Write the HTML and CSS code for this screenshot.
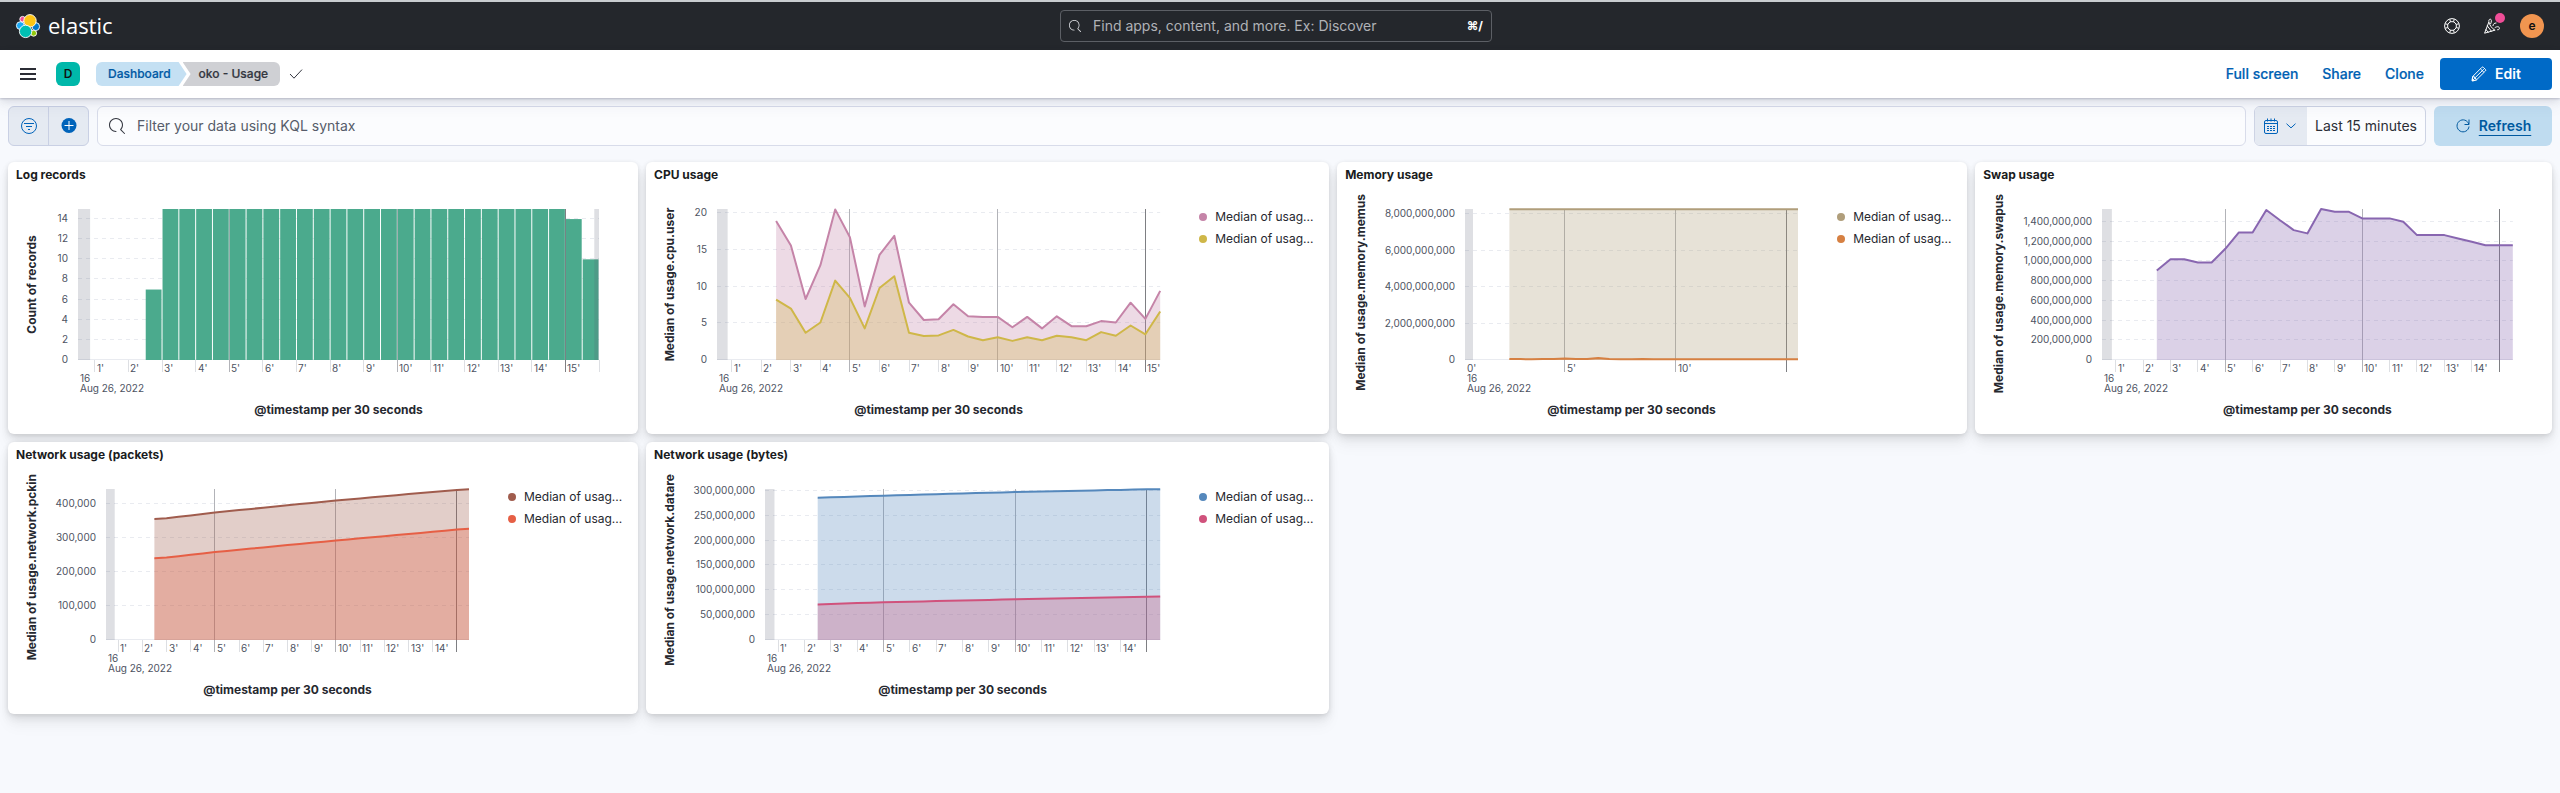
FILE: index.html
```html
<!DOCTYPE html>
<html lang="en">
<head>
<meta charset="utf-8">
<meta name="viewport" content="width=device-width, initial-scale=1">
<title>oko - Usage - Elastic</title>
<link rel="stylesheet" href="styles.css">
</head>
<body>
<header class="topbar">
  <a class="brand" href="#" aria-label="Elastic home">
    <svg class="brand-mark" viewBox="0 0 24 24" aria-hidden="true">
      <g stroke="#fff" stroke-width="0.9">
        <circle cx="6.6" cy="5.2" r="2.8" fill="#f04e98"/>
        <circle cx="17.6" cy="19.2" r="3" fill="#93c90e"/>
        <ellipse cx="4.4" cy="11.6" rx="4" ry="3.9" fill="#1ba9f5"/>
        <ellipse cx="19.8" cy="12.6" rx="3.8" ry="4" fill="#0077cc"/>
        <circle cx="14" cy="6.8" r="6.2" fill="#fec514"/>
        <circle cx="9.6" cy="17.4" r="6.2" fill="#00bfb3"/>
      </g>
    </svg>
    <span class="brand-name">elastic</span>
  </a>
  <label class="global-search">
    <svg class="icon-search-small" viewBox="0 0 16 16" aria-hidden="true"><path fill="currentColor" d="M11.271 11.978l3.872 3.873a.502.502 0 00.708 0 .502.502 0 000-.708l-3.565-3.564c2.38-2.747 2.267-6.923-.342-9.532-2.73-2.73-7.17-2.73-9.898 0-2.728 2.729-2.728 7.17 0 9.9a6.955 6.955 0 004.949 2.05.5.5 0 000-1 5.96 5.96 0 01-4.242-1.757 6.01 6.01 0 010-8.486 6.004 6.004 0 018.484 0 6.01 6.01 0 010 8.486.5.5 0 00.034.738z"/></svg>
    <input type="search" aria-label="Find apps, content, and more" placeholder="Find apps, content, and more. Ex: Discover">
    <kbd class="shortcut">⌘/</kbd>
  </label>
  <div class="topbar-actions">
    <button class="topbar-button" type="button" aria-label="Help">
      <svg class="icon" viewBox="0 0 16 16" fill="none" stroke="currentColor" aria-hidden="true">
        <circle cx="8" cy="8" r="7.4"/><circle cx="8" cy="8" r="4.4"/>
        <path d="M5.800 1.200l.6 2.700M10.200 1.200l-.6 2.700M5.800 14.800l.6-2.700M10.200 14.800l-.6-2.700M1.200 5.800l2.700.6M1.200 10.200l2.700-.6M14.800 5.800l-2.700.6M14.800 10.200l-2.700-.6"/>
      </svg>
    </button>
    <button class="topbar-button" type="button" aria-label="News feed">
      <svg class="icon" viewBox="0 0 16 16" fill="none" stroke="currentColor" stroke-linecap="round" stroke-linejoin="round" aria-hidden="true">
        <path d="M4.800 4.200L.6 15.200l10.200-3M4.800 4.200c1 3.400 3.200 6.200 6 8M3.400 8l4 5.200M2 11.600l2.200 2.600"/>
        <path d="M4.800 3.200C4.400 1 7.200.2 7.400 2.600c.1 1.400-.4 2.200-.8 3.200M9 7.600c.2-1.600 1.200-2.600 3-2.600M11 9.600c2.200-1.600 4.600-1 4.400.8-.1 1-.9 1.600-1.800 1.400"/>
      </svg>
      <span class="news-dot"></span>
    </button>
    <button class="avatar" type="button" aria-label="Account menu">e</button>
  </div>
</header>

<nav class="navbar" aria-label="Dashboard navigation">
  <button class="menu-button" type="button" aria-label="Toggle primary navigation">
    <svg class="icon" viewBox="0 0 16 16" aria-hidden="true"><path fill="currentColor" d="M0 2h16v2H0zM0 7h16v2H0zM0 12h16v2H0z"/></svg>
  </button>
  <button class="space-button" type="button" aria-label="Default space">D</button>
  <div class="breadcrumbs">
    <a class="crumb crumb-link" href="#">Dashboard</a>
    <span class="crumb crumb-current" aria-current="page">oko - Usage</span>
  </div>
  <svg class="icon-check" viewBox="0 0 14 12" fill="none" stroke="currentColor" aria-hidden="true"><path d="M1 6l4 4.200L13 1.600"/></svg>
  <div class="nav-actions">
    <a class="nav-link" href="#">Full screen</a>
    <a class="nav-link" href="#">Share</a>
    <a class="nav-link" href="#">Clone</a>
    <button class="edit-button" type="button">
      <svg class="icon" viewBox="0 0 16 16" fill="none" stroke="currentColor" stroke-linejoin="round" aria-hidden="true">
        <path d="M1.600 10.600L10.800 1.400q.8-.8 1.600 0l2 2q.8.8 0 1.600L5.200 14.200l-4 .6zM3.400 12.400l9.400-9.200M1.600 10.600l1.800.2v1.600l1.600.2.200 1.600M9.400 2.800l3.600 3.600"/>
        <path fill="currentColor" d="M1.400 12.600l2 2-2.200.300z"/>
      </svg>
      Edit
    </button>
  </div>
</nav>

<main>
  <form class="query-bar">
    <div class="filter-group">
      <button class="filter-button" type="button" aria-label="Saved query menu">
        <svg class="icon" viewBox="0 0 16 16" fill="none" stroke="currentColor" aria-hidden="true"><circle cx="8" cy="8" r="7.500"/><path d="M3 5.500h10M5 8.500h6M7 11.500h2"/></svg>
      </button>
      <button class="filter-button" type="button" aria-label="Add filter">
        <svg class="icon" viewBox="0 0 16 16" aria-hidden="true"><circle cx="8" cy="7.500" r="7.500" fill="currentColor"/><path d="M3.500 7.500h9M8 3v9" stroke="#fff"/></svg>
      </button>
    </div>
    <label class="query-input">
      <svg class="icon" viewBox="0 0 16 16" aria-hidden="true"><path fill="currentColor" d="M11.271 11.978l3.872 3.873a.502.502 0 00.708 0 .502.502 0 000-.708l-3.565-3.564c2.38-2.747 2.267-6.923-.342-9.532-2.73-2.73-7.17-2.73-9.898 0-2.728 2.729-2.728 7.17 0 9.9a6.955 6.955 0 004.949 2.05.5.5 0 000-1 5.96 5.96 0 01-4.242-1.757 6.01 6.01 0 010-8.486 6.004 6.004 0 018.484 0 6.01 6.01 0 010 8.486.5.5 0 00.034.738z"/></svg>
      <input type="text" aria-label="KQL query" placeholder="Filter your data using KQL syntax">
    </label>
    <div class="date-picker">
      <button class="date-quick" type="button" aria-label="Date quick select">
        <svg class="icon" viewBox="0 0 16 16" fill="none" stroke="currentColor" aria-hidden="true">
          <rect x="1.500" y="2.500" width="13" height="13" rx="1.500"/><path d="M1.500 5.500h13M4.500.5v3M11.500.5v3M8 .5v3"/>
          <path d="M4 8.500h2M7 8.500h2M10 8.500h2M4 10.500h2M7 10.500h2M10 10.500h2M4 12.500h2M7 12.500h2M10 12.500h2"/>
        </svg>
        <svg class="icon-chevron" viewBox="0 0 10 6" fill="none" stroke="currentColor" aria-hidden="true"><path d="M.5.7L5 4.900 9.500.7"/></svg>
      </button>
      <button class="date-range" type="button">Last 15 minutes</button>
    </div>
    <button class="refresh-button" type="button">
      <svg class="icon" viewBox="0 0 16 16" fill="none" stroke="currentColor" aria-hidden="true"><path d="M13.800 6.200A6 6 0 1 0 14 8.500M14 1.500v5H9.500"/></svg>
      <span>Refresh</span>
    </button>
  </form>

  <div class="dashboard">
    <section class="panel span-12">
      <h2 class="panel-title">Log records</h2>
      <div class="panel-body"><svg class="chart" data-chart="logs" role="img" aria-label="Log records"></svg></div>
    </section>
    <section class="panel span-13">
      <h2 class="panel-title">CPU usage</h2>
      <div class="panel-body">
        <svg class="chart" data-chart="cpu" role="img" aria-label="CPU usage"></svg>
        <ul class="legend">
          <li><span class="dot dot-pink"></span>Median of usag...</li>
          <li><span class="dot dot-yellow"></span>Median of usag...</li>
        </ul>
      </div>
    </section>
    <section class="panel span-12">
      <h2 class="panel-title">Memory usage</h2>
      <div class="panel-body">
        <svg class="chart" data-chart="memory" role="img" aria-label="Memory usage"></svg>
        <ul class="legend">
          <li><span class="dot dot-tan"></span>Median of usag...</li>
          <li><span class="dot dot-orange"></span>Median of usag...</li>
        </ul>
      </div>
    </section>
    <section class="panel span-11">
      <h2 class="panel-title">Swap usage</h2>
      <div class="panel-body"><svg class="chart" data-chart="swap" role="img" aria-label="Swap usage"></svg></div>
    </section>
    <section class="panel span-12">
      <h2 class="panel-title">Network usage (packets)</h2>
      <div class="panel-body">
        <svg class="chart" data-chart="packets" role="img" aria-label="Network usage (packets)"></svg>
        <ul class="legend">
          <li><span class="dot dot-brown"></span>Median of usag...</li>
          <li><span class="dot dot-red"></span>Median of usag...</li>
        </ul>
      </div>
    </section>
    <section class="panel span-13">
      <h2 class="panel-title">Network usage (bytes)</h2>
      <div class="panel-body">
        <svg class="chart" data-chart="bytes" role="img" aria-label="Network usage (bytes)"></svg>
        <ul class="legend">
          <li><span class="dot dot-blue"></span>Median of usag...</li>
          <li><span class="dot dot-rose"></span>Median of usag...</li>
        </ul>
      </div>
    </section>
  </div>
</main>
<script src="charts.js"></script>
</body>
</html>
```
FILE: styles.css
```css
* { box-sizing: border-box; }

body {
  margin: 0;
  min-height: 100vh;
  background: #f7f9fd;
  color: #1a1c21;
  font-family: Inter, "Liberation Sans", sans-serif;
  font-size: 14px;
  line-height: 20px;
}

button, input { font: inherit; color: inherit; }
button { border: 0; padding: 0; background: none; cursor: pointer; }
a { color: inherit; text-decoration: none; }
.icon { width: 16px; height: 16px; flex: none; display: block; }

/* Top bar */
.topbar {
  display: grid;
  grid-template-columns: 1fr minmax(200px, 432px) 1fr;
  align-items: center;
  height: 50px;
  padding: 0 16px 0 8px;
  border-top: 2px solid #c9cdd0;
  background: #24272c;
  color: #fff;
}
.brand { display: flex; align-items: center; gap: 8px; padding-left: 8px; justify-self: start; }
.brand-mark { width: 24px; height: 24px; overflow: visible; }
.brand-name { font-family: "Open Sans", "Noto Sans", sans-serif; font-size: 22px; line-height: 24px; padding-bottom: 2px; }
.global-search {
  display: flex;
  align-items: center;
  height: 32px;
  padding: 0 8px;
  border: 1px solid #5c5f65;
  border-radius: 4px;
}
.icon-search-small { width: 12px; height: 12px; flex: none; color: #dfe1e5; }
.global-search input {
  flex: 1;
  min-width: 0;
  margin-left: 12px;
  padding: 0;
  border: 0;
  outline: 0;
  background: none;
}
.global-search input::placeholder { color: #b0b2b7; opacity: 1; }
.shortcut { font-family: Inter, "DejaVu Sans", sans-serif; font-size: 12px; font-weight: 700; }
.topbar-actions { display: flex; align-items: center; justify-content: flex-end; }
.topbar-button { position: relative; display: grid; place-items: center; width: 40px; height: 40px; }
.news-dot {
  position: absolute;
  top: 7px;
  left: 23px;
  width: 10px;
  height: 10px;
  border-radius: 50%;
  background: #f04e98;
}
.avatar {
  width: 24px;
  height: 24px;
  margin-left: 8px;
  border-radius: 50%;
  background: #f19550;
  color: #111;
  font-size: 12px;
  font-weight: 600;
  line-height: 24px;
}

/* Navigation bar */
.navbar {
  position: relative;
  display: flex;
  align-items: center;
  height: 48px;
  padding: 0 8px 0 20px;
  background: #fff;
  box-shadow: 0 1px 2px rgba(60, 64, 90, 0.25), 0 3px 8px rgba(60, 64, 90, 0.12), 0 8px 16px rgba(60, 64, 90, 0.05);
}
.menu-button { color: #2b2d35; }
.space-button {
  width: 24px;
  height: 24px;
  margin: 0 16px 0 20px;
  border-radius: 6px;
  background: #00b8aa;
  color: #111;
  font-size: 12px;
  font-weight: 600;
  line-height: 24px;
}
.breadcrumbs { display: flex; }
.crumb { height: 24px; font-size: 12px; font-weight: 600; line-height: 24px; }
.crumb-link {
  padding: 0 16px 0 12px;
  border-radius: 6px 0 0 6px;
  background: #c4e0f3;
  color: #0059a4;
  clip-path: polygon(0 0, calc(100% - 8px) 0, 100% 50%, calc(100% - 8px) 100%, 0 100%);
}
.crumb-current {
  margin-left: -4px;
  padding: 0 12px 0 16px;
  border-radius: 0 6px 6px 0;
  background: #cfd0d4;
  color: #33363f;
  clip-path: polygon(0 0, 100% 0, 100% 100%, 0 100%, 8px 50%);
}
.crumb-link, .crumb-current { font-weight: 500; -webkit-text-stroke: 0.2px currentColor; }
.icon-check { width: 14px; height: 12px; margin-left: 9px; color: #33363f; }
.nav-actions { display: flex; align-items: center; gap: 24px; margin-left: auto; }
.nav-link { color: #0061b3; font-weight: 500; -webkit-text-stroke: 0.2px currentColor; }
.edit-button {
  display: flex;
  align-items: center;
  justify-content: center;
  gap: 8px;
  width: 112px;
  height: 32px;
  margin-left: -8px;
  border-radius: 4px;
  background: #006ac7;
  color: #fff;
  font-weight: 600;
}

/* Query bar */
.query-bar { display: flex; gap: 8px; padding: 8px 8px 16px; }
.filter-group {
  display: flex;
  width: 81px;
  height: 40px;
  border: 1px solid #c9d0e4;
  border-radius: 6px;
  background: #e5eaf2;
  color: #0063ba;
}
.filter-button { flex: 1; display: grid; place-items: center; }
.filter-button + .filter-button { border-left: 1px solid #c9d0e4; }
.query-input {
  flex: 1;
  display: flex;
  align-items: center;
  gap: 12px;
  height: 40px;
  padding: 0 12px 0 11px;
  border: 1px solid #d8dcea;
  border-radius: 6px;
  background: #fbfcfe;
  color: #33363f;
}
.query-input input { flex: 1; min-width: 0; padding: 0; border: 0; outline: 0; background: none; }
.query-input input::placeholder { color: #565c6a; opacity: 1; }
.date-picker {
  display: flex;
  height: 40px;
  border: 1px solid #cdd3e4;
  border-radius: 6px;
  background: #fbfcfe;
  overflow: hidden;
}
.date-quick {
  display: flex;
  align-items: center;
  gap: 7px;
  padding: 0 11px 0 8px;
  background: #e5eaf2;
  color: #0063ba;
}
.icon-chevron { width: 10px; height: 6px; }
.date-range { padding: 0 8px; color: #2b2e36; }
.refresh-button {
  display: flex;
  align-items: center;
  justify-content: center;
  gap: 8px;
  width: 118px;
  height: 40px;
  border-radius: 6px;
  background: #bfdcf0;
  color: #00599f;
  font-weight: 600;
}
.refresh-button span { text-decoration: underline; text-underline-offset: 4px; }

/* Dashboard */
.dashboard {
  display: grid;
  grid-template-columns: repeat(48, minmax(0, 1fr));
  gap: 8px;
  padding: 0 8px 8px;
}
.span-11 { grid-column: span 11; }
.span-12 { grid-column: span 12; }
.span-13 { grid-column: span 13; }
.panel {
  border-radius: 6px;
  background: #fff;
  box-shadow: 0 1px 4px rgba(0, 0, 0, 0.08), 0 3px 8px rgba(0, 0, 0, 0.06), 0 6px 12px rgba(0, 0, 0, 0.05), 0 12px 15px rgba(0, 0, 0, 0.04);
}
/* The second row starts beside the first two panels only. */
.panel:nth-child(5) { grid-column: 1 / span 12; }
.panel-title { margin: 0; padding: 4px 8px; height: 28px; font-size: 12px; font-weight: 700; line-height: 18px; }
.panel-body { display: flex; height: 244px; }
.chart { flex: 1; min-width: 0; height: 244px; overflow: hidden; }
.legend {
  width: 130px;
  flex: none;
  margin: 0;
  padding: 16px 0 0;
  list-style: none;
  color: #26282f;
  font-size: 12px;
  line-height: 22px;
}
.legend li { display: flex; align-items: center; gap: 8px; white-space: nowrap; }
.dot { width: 8px; height: 8px; border-radius: 50%; }
.dot-pink { background: #c584a8; }
.dot-yellow { background: #cfb748; }
.dot-tan { background: #b09e7b; }
.dot-orange { background: #d68042; }
.dot-brown { background: #a05c4d; }
.dot-red { background: #e65f45; }
.dot-blue { background: #5588bc; }
.dot-rose { background: #d0527c; }

/* Chart parts */
.tick-label { fill: #4d5362; font-size: 10px; }
.axis-title { fill: #26282f; font-size: 12px; font-weight: 700; text-anchor: middle; }
.y-label { text-anchor: end; }
.grid-line { stroke: #e9ebf0; stroke-dasharray: 4 4; }
.axis-line { stroke: #e9ebf0; }
.tick-minor { stroke: #dddfe3; }
.tick-major { stroke: #b2b3b8; }
.tick-strong { stroke: #7e7f83; }
.partial { fill: #5a5f72; fill-opacity: 0.2; }
.bar { fill: #4baa8d; }
.line { fill: none; stroke-width: 2; stroke-linejoin: round; }
.area { fill-opacity: 0.3; }
```
FILE: charts.js
```js
(function () {
  const NS = "http://www.w3.org/2000/svg";
  const PLOT_TOP = 19;
  const PLOT_BOTTOM = 170;
  const PLOT_MARGIN_RIGHT = 39;

  const number = (v) => v.toLocaleString("en-US");

  // Evenly spaced samples through a few [minute, value] anchors.
  function through(anchors) {
    const out = [];
    for (let t = 2.5; t <= 15.5; t += 0.5) {
      let i = 1;
      while (i < anchors.length - 1 && anchors[i][0] < t) i++;
      const [x0, y0] = anchors[i - 1];
      const [x1, y1] = anchors[i];
      out.push(y0 + ((y1 - y0) * (t - x0)) / (x1 - x0));
    }
    return out;
  }

  const charts = {
    logs: {
      left: 70, end: 16, max: 15, yStep: 2, yTitle: "Count of records",
      bars: [7].concat(Array(24).fill(15), [14, 10]),
      series: []
    },
    cpu: {
      left: 71, end: 15.5, max: 20.55, yStep: 5, yTitle: "Median of usage.cpu.user",
      series: [
        { color: "#c584a8", values: [18.9, 15.6, 8.3, 12.9, 20.5, 16.7, 7.3, 14.3, 16.9, 7.8, 5.45, 5.55, 7.6, 5.95, 5.86, 5.86, 4.45, 5.86, 4.3, 5.95, 4.6, 4.6, 5.3, 5.1, 7.8, 5.6, 9.4] },
        { color: "#cfb748", values: [8.2, 7, 3.7, 5.1, 10.8, 8.45, 4.3, 9.8, 11.4, 3.7, 3.25, 3.35, 4.1, 3.2, 2.7, 3.1, 2.6, 3.1, 2.7, 3.3, 3.1, 2.7, 3.8, 3.3, 4.7, 3.5, 6.6] }
      ]
    },
    memory: {
      left: 128, end: 15.5, max: 8.275e9, yStep: 2e9, xStep: 5, yTitle: "Median of usage.memory.memus",
      series: [
        { color: "#b09e7b", values: Array(27).fill(8.26e9) },
        { color: "#d68042", values: [5, 5, 4, 6, 5, 9, 5, 5, 11, 5, 4, 4, 5].concat(Array(14).fill(4)).map((v) => v * 1e7) }
      ]
    },
    swap: {
      left: 127, end: 15.5, max: 1.532e9, yStep: 2e8, yTitle: "Median of usage.memory.swapus",
      series: [
        { color: "#8866b0", values: [907, 1023, 1023, 989, 989, 1128, 1295, 1295, 1522, 1417, 1318, 1284, 1532, 1505, 1505, 1437, 1437, 1437, 1403, 1267, 1267, 1267, 1233, 1200, 1165, 1165, 1165].map((v) => v * 1e6) }
      ]
    },
    packets: {
      left: 98, end: 15.5, max: 444000, yStep: 100000, yTitle: "Median of usage.network.pckin",
      series: [
        { color: "#a05c4d", values: through([[2.5, 356000], [3, 358000], [5, 375000], [10, 410000], [15, 441500], [15.5, 443500]]) },
        { color: "#e65f45", values: through([[2.5, 240500], [3, 242500], [5, 258500], [10, 292500], [15, 324500], [15.5, 327000]]) }
      ]
    },
    bytes: {
      left: 119, end: 15.5, max: 304e6, yStep: 5e7, yTitle: "Median of usage.network.datare",
      series: [
        { color: "#5588bc", values: through([[2.5, 286.5e6], [5, 290.5e6], [10, 298e6], [15, 303.3e6], [15.5, 303.6e6]]) },
        { color: "#d0527c", values: through([[2.5, 71.5e6], [5, 76e6], [10, 82e6], [15, 87e6], [15.5, 87.8e6]]) }
      ]
    }
  };

  function add(parent, name, attrs, text) {
    const node = document.createElementNS(NS, name);
    for (const key in attrs) node.setAttribute(key, attrs[key]);
    if (text !== undefined) node.textContent = text;
    parent.appendChild(node);
    return node;
  }

  function draw(svg) {
    const c = charts[svg.dataset.chart];
    const start = 0.5;
    const right = svg.getBoundingClientRect().width - PLOT_MARGIN_RIGHT;
    const x = (t) => c.left + ((t - start) / (c.end - start)) * (right - c.left);
    const y = (v) => PLOT_BOTTOM - (v / c.max) * (PLOT_BOTTOM - PLOT_TOP);
    const crisp = (v) => Math.floor(v) + 0.5;
    const step = c.xStep || 1;
    svg.replaceChildren();

    for (let v = 0; v <= c.max; v += c.yStep) {
      const gy = crisp(y(v) - 0.5);
      add(svg, "line", { class: v ? "grid-line" : "axis-line", x1: c.left, x2: right, y1: gy, y2: gy });
      add(svg, "text", { class: "tick-label y-label", x: c.left - 10, y: Math.round(y(v)) + 3 }, number(v));
    }

    for (let t = step; t <= c.end; t += step) {
      const major = t % 5 === 0;
      const kind = t === 15 ? "tick-strong" : major ? "tick-major" : "tick-minor";
      const gx = crisp(x(t));
      add(svg, "line", { class: kind, x1: gx, x2: gx, y1: major ? PLOT_TOP : PLOT_BOTTOM, y2: PLOT_BOTTOM + 12 });
      if (right - x(t) >= 14) {
        add(svg, "text", { class: "tick-label", x: Math.round(x(t)) + 2, y: 182 }, t + "'");
      }
    }
    if (step === 5) add(svg, "text", { class: "tick-label", x: c.left + 2, y: 182 }, "0'");
    add(svg, "text", { class: "tick-label", x: c.left + 2, y: 192 }, "16");
    add(svg, "text", { class: "tick-label", x: c.left + 2, y: 202 }, "Aug 26, 2022");

    (c.bars || []).forEach((v, i) => {
      const x0 = x(2.5 + i * 0.5);
      add(svg, "rect", { class: "bar", x: x0 + 0.5, width: x(3 + i * 0.5) - x0 - 1, y: y(v), height: PLOT_BOTTOM - y(v) });
    });

    c.series.forEach((s) => {
      const points = s.values.map((v, i) => x(2.5 + i * 0.5).toFixed(1) + "," + y(v).toFixed(1));
      const base = x(15.5).toFixed(1) + "," + PLOT_BOTTOM + " " + x(2.5).toFixed(1) + "," + PLOT_BOTTOM;
      add(svg, "polygon", { class: "area", fill: s.color, points: points.join(" ") + " " + base });
      add(svg, "polyline", { class: "line", stroke: s.color, points: points.join(" ") });
    });

    const band = (from, to) =>
      add(svg, "rect", { class: "partial", x: x(from), width: x(to) - x(from), y: PLOT_TOP, height: PLOT_BOTTOM - PLOT_TOP });
    band(start, 0.86);
    if (c.end > 15.5) band(15.86, c.end);

    add(svg, "text", { class: "axis-title", x: (c.left + right) / 2, y: 224 }, "@timestamp per 30 seconds");
    const title = add(svg, "text", { class: "axis-title" }, c.yTitle);
    // Long titles stay below the top edge of the chart.
    const centre = Math.max((PLOT_TOP + PLOT_BOTTOM) / 2, 4 + title.getComputedTextLength() / 2);
    title.setAttribute("transform", "translate(28 " + centre + ") rotate(-90)");
  }

  const drawAll = () => document.querySelectorAll("[data-chart]").forEach(draw);
  drawAll();
  window.addEventListener("resize", drawAll);
})();
```
